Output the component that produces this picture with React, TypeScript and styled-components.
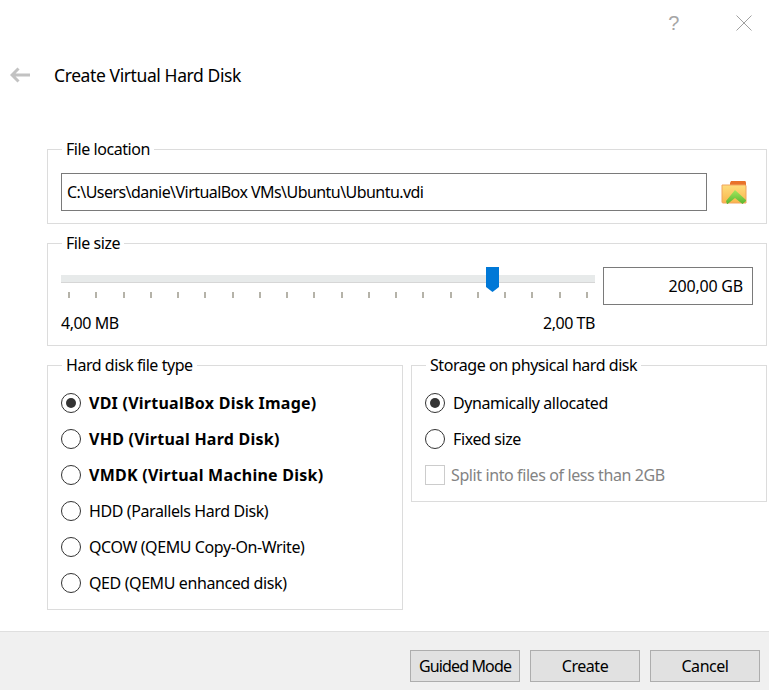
import React from "react";
import styled, { createGlobalStyle } from "styled-components";

const GlobalStyle = createGlobalStyle`
  html, body {
    margin: 0;
    background: #ffffff;
  }
  body {
    font-family: "Noto Sans", "Open Sans", sans-serif;
    font-size: 16px;
    letter-spacing: -0.45px;
    color: #000000;
  }
`;

const StPage = styled.div`
  display: flex;
  flex-direction: column;
  width: 769px;
  height: 690px;
  overflow: hidden;
  background: #ffffff;
`;

const StTopBar = styled.div`
  display: flex;
  justify-content: flex-end;
  align-items: center;
  gap: 57px;
  height: 45px;
  padding-right: 17px;
`;

const StHelp = styled.span`
  font-family: "Liberation Sans", sans-serif;
  font-size: 20px;
  line-height: 24px;
  padding-top: 1px;
  color: #a6a6a6;
`;

const StTitleRow = styled.div`
  display: flex;
  align-items: center;
  gap: 24px;
  height: 60px;
  padding-left: 10px;
  margin-bottom: 34px;
`;

const StTitle = styled.h1`
  margin: 0;
  font-size: 17.5px;
  font-weight: 400;
  letter-spacing: -0.4px;
`;

const StContent = styled.div`
  display: flex;
  flex-direction: column;
  gap: 9px;
  flex-grow: 1;
  padding: 0 2px 0 47px;
`;

const StGroup = styled.fieldset<{ $topPad?: number; $bottomPad: number }>`
  box-sizing: border-box;
  width: 100%;
  min-width: 0;
  margin: 0;
  padding: ${(props) => props.$topPad ?? 14}px 13px ${(props) => props.$bottomPad}px;
  border: 1px solid #dcdcdc;
`;

const StLegend = styled.legend`
  height: 20px;
  line-height: 20px;
  padding: 0 4px;
  margin-left: 1px;
`;

const StPathRow = styled.div`
  display: flex;
  align-items: center;
  gap: 14px;
`;

const StField = styled.div`
  box-sizing: border-box;
  display: flex;
  align-items: center;
  height: 38px;
  border: 1px solid #7a7a7a;
  background: #ffffff;
`;

const StPathField = styled(StField)`
  width: 646px;
  padding-left: 5px;
  letter-spacing: -0.55px;
`;

const StSpinField = styled(StField)`
  justify-content: flex-end;
  width: 150px;
  padding-right: 9px;
  letter-spacing: -0.2px;
`;

const StSizeRow = styled.div`
  display: flex;
  gap: 8px;
  align-items: flex-start;
`;

const StSliderColumn = styled.div`
  display: flex;
  flex-direction: column;
  width: 534px;
`;

const StSlider = styled.div`
  position: relative;
  height: 25px;
  padding-top: 8px;
  box-sizing: border-box;
`;

const StTrack = styled.div`
  width: 100%;
  height: 8px;
  background: #e7eaea;
  border-bottom: 1px solid #d6d6d6;
  box-sizing: border-box;
`;

const StThumb = styled.svg`
  position: absolute;
  left: 425px;
  top: 0;
`;

const StTicks = styled.div`
  display: flex;
  justify-content: space-between;
  padding: 0 7px;
  height: 6px;
`;

const StTick = styled.span`
  width: 2px;
  height: 6px;
  background: #b5b3a9;
`;

const StRangeLabels = styled.div`
  display: flex;
  justify-content: space-between;
  margin-top: 14px;
  line-height: 22px;
`;

const StBottomGroups = styled.div`
  display: flex;
  gap: 8px;
  align-items: flex-start;
`;

const StOption = styled.div`
  display: flex;
  align-items: center;
  height: 36px;
`;

const StRadio = styled.span<{ $checked?: boolean }>`
  box-sizing: border-box;
  display: flex;
  align-items: center;
  justify-content: center;
  flex: none;
  width: 20px;
  height: 20px;
  margin-right: 8px;
  border: 1px solid #333333;
  border-radius: 50%;
  background: #ffffff;
  &::after {
    content: "";
    display: ${(props) => (props.$checked ? "block" : "none")};
    width: 10px;
    height: 10px;
    border-radius: 50%;
    background: #333333;
  }
`;

const StCheckbox = styled.span`
  box-sizing: border-box;
  flex: none;
  width: 20px;
  height: 20px;
  margin-right: 6px;
  border: 1px solid #cccccc;
  background: #ffffff;
`;

const StOptionText = styled.span<{ $bold?: boolean; $disabled?: boolean }>`
  font-weight: ${(props) => (props.$bold ? 700 : 400)};
  letter-spacing: ${(props) => (props.$bold ? "0.25px" : "-0.4px")};
  color: ${(props) => (props.$disabled ? "#838383" : "#000000")};
  white-space: nowrap;
`;

const StFooter = styled.div`
  display: flex;
  justify-content: flex-end;
  gap: 10px;
  height: 59px;
  padding: 18px 9px 0 0;
  box-sizing: border-box;
  background: #f0f0f0;
  border-top: 1px solid #dfdfdf;
`;

const StButton = styled.button<{ $tight?: boolean }>`
  width: 110px;
  height: 32px;
  padding: 0;
  border: 1px solid #adadad;
  background: #e1e1e1;
  color: #000000;
  font: inherit;
  letter-spacing: ${(props) => (props.$tight ? "-0.85px" : "inherit")};
`;

const FolderIcon = () => (
  <svg width="26" height="24" viewBox="0 0 26 24">
    <defs>
      <linearGradient id="folderBody" x1="0" y1="0" x2="0" y2="1">
        <stop offset="0" stopColor="#fedd7c" />
        <stop offset="1" stopColor="#f9b54c" />
      </linearGradient>
      <linearGradient id="arrowFill" x1="0" y1="0" x2="0" y2="1">
        <stop offset="0" stopColor="#a5e65e" />
        <stop offset="1" stopColor="#58b52e" />
      </linearGradient>
    </defs>
    <path d="M9 3 L10 1 H24 Q25 1 25 3 V7 H9 Z" fill="#e8722a" />
    <path d="M1 5 H24 Q25 5 25 6 V23 H2 Q1 23 1 22 Z" fill="url(#folderBody)" stroke="#f0a45e" strokeWidth="1" />
    <path d="M14 10 L25 20 V21 L21.5 24 L14 18 L6.5 24 L6 24 L5 21 Z" fill="url(#arrowFill)" />
  </svg>
);

const BackArrow = () => (
  <svg width="20" height="16" viewBox="0 0 20 16">
    <path d="M8.5 1.5 L2 8 L8.5 14.5 M2.5 8 H20" fill="none" stroke="#c2c2c2" strokeWidth="3" />
  </svg>
);

const CloseIcon = () => (
  <svg width="16" height="16" viewBox="0 0 16 16">
    <path d="M0.5 0.5 L15.5 15.5 M15.5 0.5 L0.5 15.5" fill="none" stroke="#a0a0a0" strokeWidth="1" />
  </svg>
);

const types = [
  { label: "VDI (VirtualBox Disk Image)", bold: true, checked: true },
  { label: "VHD (Virtual Hard Disk)", bold: true },
  { label: "VMDK (Virtual Machine Disk)", bold: true },
  { label: "HDD (Parallels Hard Disk)" },
  { label: "QCOW (QEMU Copy-On-Write)" },
  { label: "QED (QEMU enhanced disk)" },
];

const App = () => {
  const ticks = Array.from({ length: 20 }, (_, index) => index);
  return (
    <StPage>
      <GlobalStyle />
      <StTopBar>
        <StHelp>?</StHelp>
        <CloseIcon />
      </StTopBar>
      <StTitleRow>
        <BackArrow />
        <StTitle>Create Virtual Hard Disk</StTitle>
      </StTitleRow>
      <StContent>
        <StGroup $bottomPad={12}>
          <StLegend>File location</StLegend>
          <StPathRow>
            <StPathField>C:\Users\danie\VirtualBox VMs\Ubuntu\Ubuntu.vdi</StPathField>
            <FolderIcon />
          </StPathRow>
        </StGroup>
        <StGroup $bottomPad={11}>
          <StLegend>File size</StLegend>
          <StSizeRow>
            <StSliderColumn>
              <StSlider>
                <StTrack />
                <StThumb width="13" height="25" viewBox="0 0 13 25">
                  <path d="M0 0 H13 V20 L6.5 25 L0 20 Z" fill="#0078d7" />
                </StThumb>
              </StSlider>
              <StTicks>
                {ticks.map((tick) => (
                  <StTick key={tick} />
                ))}
              </StTicks>
              <StRangeLabels>
                <span>4,00 MB</span>
                <span>2,00 TB</span>
              </StRangeLabels>
            </StSliderColumn>
            <StSpinField>200,00 GB</StSpinField>
          </StSizeRow>
        </StGroup>
        <StBottomGroups>
          <StGroup $topPad={10} $bottomPad={8}>
            <StLegend>Hard disk file type</StLegend>
            {types.map((type) => (
              <StOption key={type.label}>
                <StRadio $checked={type.checked} />
                <StOptionText $bold={type.bold}>{type.label}</StOptionText>
              </StOption>
            ))}
          </StGroup>
          <StGroup $topPad={10} $bottomPad={8}>
            <StLegend>Storage on physical hard disk</StLegend>
            <StOption>
              <StRadio $checked />
              <StOptionText>Dynamically allocated</StOptionText>
            </StOption>
            <StOption>
              <StRadio />
              <StOptionText>Fixed size</StOptionText>
            </StOption>
            <StOption>
              <StCheckbox />
              <StOptionText $disabled>Split into files of less than 2GB</StOptionText>
            </StOption>
          </StGroup>
        </StBottomGroups>
      </StContent>
      <StFooter>
        <StButton $tight>Guided Mode</StButton>
        <StButton>Create</StButton>
        <StButton>Cancel</StButton>
      </StFooter>
    </StPage>
  );
};

export default App;
